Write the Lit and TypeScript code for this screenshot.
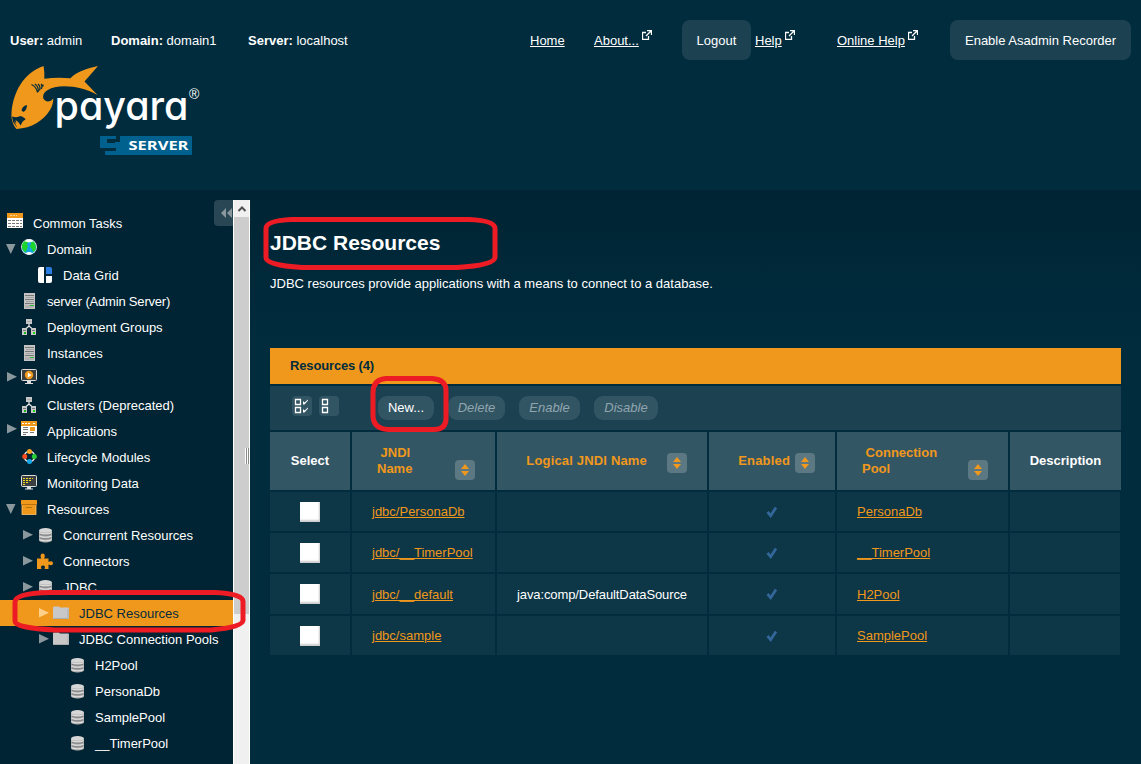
import { LitElement, html, svg, css } from "lit";
import { customElement } from "lit/decorators.js";

const server = svg`<g shape-rendering="crispEdges"><rect x="3" y="5" width="11" height="16" fill="#c4c4c4"/><path d="M4 7.500h9M4 11.500h9M4 15.500h9" stroke="#777" stroke-width="1"/><path d="M5 9.500h8M5 13.500h8" stroke="#a2a2a2"/><rect x="4" y="17" width="9" height="3" fill="#b0b0b0"/><rect x="9" y="17" width="4" height="1" fill="#2fb52f"/></g>`;
const cluster = svg`<path d="M8 10v2M8 12L4 15.500M8 12l4 3.500" stroke="#e8e8e8" stroke-width="1.200" fill="none"/><g shape-rendering="crispEdges"><rect x="5" y="5" width="6" height="5" fill="#c8c8c8"/><rect x="6" y="7" width="4" height="1" fill="#aaa"/><rect x="1" y="14" width="5" height="7" fill="#c8c8c8"/><rect x="10" y="14" width="5" height="7" fill="#c8c8c8"/><path d="M2 16.500h3M11 16.500h3" stroke="#777"/><rect x="3" y="18" width="2" height="2" fill="#17b517"/><rect x="12" y="18" width="2" height="2" fill="#17d517"/></g>`;
const db = svg`<path d="M2 8.500v9.500c0 1.500 3 2.500 6.500 2.500s6.500-1 6.500-2.500V8.500z" fill="#a9a9a9"/><path d="M2.500 10.500c1.500 1.600 10.500 1.600 12 0M2.500 14c1.500 1.600 10.500 1.600 12 0M2.500 17.500c1.500 1.600 10.500 1.600 12 0" stroke="#dedede" stroke-width="1.100" fill="none"/><path d="M3 12.300c2 1.400 9 1.400 11 0M3 15.800c2 1.400 9 1.400 11 0" stroke="#777" stroke-width=".8" fill="none"/><ellipse cx="8.500" cy="8.400" rx="6.400" ry="2.300" fill="#d6d6d6"/>`;
const folder = svg`<path d="M0 7.500q0-1 1-1h5l1 1h8q1 0 1 1v9.500q0 1-1 1H1q-1 0-1-1z" fill="#c8c8c8"/><path d="M.5 18.500h14.500V9" stroke="#aaa" fill="none"/>`;

const icons: Record<string, unknown> = {
  tasks: svg`<g shape-rendering="crispEdges"><rect y="3" width="16" height="15" fill="#fff"/><rect y="3" width="16" height="5" fill="#f0981b"/><path d="M3 5.500h2M6 5.500h2M9 5.500h1" stroke="#fbd59d"/><path d="M1 10.500h14M1 13.500h14M1 16.500h14" stroke="#777" stroke-dasharray="3 1" /></g>`,
  globe: svg`<circle cx="8" cy="11" r="7.900" fill="#fff"/><circle cx="8" cy="11" r="7.200" fill="#16a4e0"/><path d="M1 9C2 6 4 4.500 6.500 4l1 2-2 2 1.500 2-1 3-1.500 3.500C2 15 .5 12 1 9zM10 5.500l3 .5c2 3 2.500 6 1 8.500l-2 1.500-1-3-2-2 1-3z" fill="#1ed62a"/><path d="M3.500 5.200Q8 1.500 12.500 5.200L8 6.500zM4.500 17.200Q8 15 11.500 17.200 8 20 4.500 17.200z" fill="#fff"/>`,
  grid: svg`<path d="M3 5h4v16H3q-2 0-2-2V7q0-2 2-2zM9 14h6v5q0 2-2 2H9z" fill="#fff"/><path d="M9 5h4q2 0 2 2v5H9z" fill="#2a7de1"/>`,
  server,
  cluster,
  node: svg`<rect x=".5" y="3.500" width="15" height="11" rx="1" fill="#3c3f40" stroke="#ddd"/><path d="M6 15h4v2h2v1H4v-1h2z" fill="#ddd"/><circle cx="8" cy="9" r="4.200" fill="#f0981b"/><path d="M6.800 6.500v5L10.500 9z" fill="#fff"/>`,
  apps: svg`<g shape-rendering="crispEdges"><rect y="3" width="16" height="15" fill="#fff"/><rect y="3" width="16" height="5" fill="#f0981b"/><path d="M1 5.500h8M12 5.500h2" stroke="#fff" stroke-dasharray="2 1"/><path d="M2 9.500h5M2 11.500h5M2 14.500h5M2 16.500h3M9 14.500h4" stroke="#777"/><rect x="9" y="9" width="5" height="4" fill="#f0981b"/></g>`,
  lifecycle: svg`<circle cx="8.500" cy="12.500" r="5.200" stroke="#ddd" stroke-width="1.500" fill="none"/><circle cx="8.500" cy="7.500" r="2.500" fill="#f6a01b"/><circle cx="3.700" cy="12.500" r="2.500" fill="#fb4b1e"/><circle cx="13.300" cy="12.500" r="2.500" fill="#24cf35"/><circle cx="8.500" cy="17.500" r="2.500" fill="#14a8e6"/>`,
  monitor: svg`<rect x=".5" y="5.500" width="15" height="11" rx="1" fill="#3c3f40" stroke="#ddd"/><path d="M6 17h4v1.500h2v1H4v-1h2z" fill="#ddd"/><path d="M2 8.500h10M2 10.500h8M2 12.500h6M2 14.500h2" stroke="#f0da20" stroke-dasharray="2 1" shape-rendering="crispEdges"/>`,
  box: svg`<rect x="1" y="8" width="14" height="10.500" fill="#f0981b" stroke="#ffc46e" stroke-width=".8"/><rect y="4" width="16" height="4.500" rx=".5" fill="#f0981b"/><path d="M1 8.500h14" stroke="#b9700f"/><path d="M5 11.500h6" stroke="#b9700f"/>`,
  db,
  puzzle: svg`<path d="M0 10.500h4.500c-1.500-2-1-5 1.200-5s2.800 3 1.300 5h4.500v3.500c2-1.500 4.500-1 4.500 1.200s-2.500 2.500-4.500 1.200V21H7.500c1-2 .5-3.500-1.500-3.500S3.500 19 4.500 21H0z" fill="#f0981b"/>`,
  folder,
};

type Node = { t: string; icon: string; lvl: number; arrow?: "open" | "shut"; sel?: boolean; tight?: boolean };
const tree: Node[] = [
  { t: "Common Tasks", icon: "tasks", lvl: 0 },
  { t: "Domain", icon: "globe", lvl: 1, arrow: "open" },
  { t: "Data Grid", icon: "grid", lvl: 2 },
  { t: "server (Admin Server)", icon: "server", lvl: 1, tight: true },
  { t: "Deployment Groups", icon: "cluster", lvl: 1 },
  { t: "Instances", icon: "server", lvl: 1 },
  { t: "Nodes", icon: "node", lvl: 1, arrow: "shut" },
  { t: "Clusters (Deprecated)", icon: "cluster", lvl: 1 },
  { t: "Applications", icon: "apps", lvl: 1, arrow: "shut" },
  { t: "Lifecycle Modules", icon: "lifecycle", lvl: 1 },
  { t: "Monitoring Data", icon: "monitor", lvl: 1 },
  { t: "Resources", icon: "box", lvl: 1, arrow: "open" },
  { t: "Concurrent Resources", icon: "db", lvl: 2, arrow: "shut" },
  { t: "Connectors", icon: "puzzle", lvl: 2, arrow: "shut" },
  { t: "JDBC", icon: "db", lvl: 2, arrow: "shut" },
  { t: "JDBC Resources", icon: "folder", lvl: 3, arrow: "shut", sel: true },
  { t: "JDBC Connection Pools", icon: "folder", lvl: 3, arrow: "shut" },
  { t: "H2Pool", icon: "db", lvl: 4 },
  { t: "PersonaDb", icon: "db", lvl: 4 },
  { t: "SamplePool", icon: "db", lvl: 4 },
  { t: "__TimerPool", icon: "db", lvl: 4 },
];

const rows = [
  ["jdbc/PersonaDb", "", "PersonaDb"],
  ["jdbc/__TimerPool", "", "__TimerPool"],
  ["jdbc/__default", "java:comp/DefaultDataSource", "H2Pool"],
  ["jdbc/sample", "", "SamplePool"],
];

const ext = html`<svg class="ext" width="10" height="10" viewBox="0 0 10 10"><path d="M4 2.500H.5v7h6V6M5 .5h4.500V5M9 1L4 6" fill="none" stroke="#fff" stroke-width="1.300"/></svg>`;
const sort = html`<span class="sort"><svg width="20" height="20"><path d="M6 9l4-5 4 5zM6 11h8l-4 5z" fill="#f0981b"/></svg></span>`;

@customElement("app-root")
export class AppRoot extends LitElement {
  static styles = css`
    :host { display: block; position: relative; width: 1141px; height: 764px; overflow: hidden; background: #002c3e; color: #fff; font: 13px/16px "Liberation Sans", Arial, sans-serif; }
    * { box-sizing: border-box; }
    svg { display: block; flex: none; }
    header { height: 190px; padding-top: 20px; }
    .top { display: grid; grid-template-columns: 101px 137px 282px 64px 88px 73px 82px 113px 181px; align-items: center; height: 40px; padding-left: 10px; white-space: nowrap; }
    .top > span, .top > u { padding-top: 2px; }
    .lnk { display: flex; }
    .ext { margin: -3px 0 0 3px; }
    .big { height: 40px; border-radius: 8px; background: #1c4252; display: flex; align-items: center; justify-content: center; }
    .logout { width: 69px; }
    .logo { margin: 4px 0 0 8px; }
    .word { font: 500 40px Inter, sans-serif; font-feature-settings: "cv11"; }
    .reg { font: 14px "Liberation Sans", sans-serif; }
    .srv { font: 700 12.500px "Open Sans", sans-serif; }
    .body { display: flex; height: 574px; background: #002433; }
    aside { width: 233px; background: #002433; padding-top: 20px; flex: none; overflow: hidden; white-space: nowrap; }
    .row { height: 26px; display: flex; padding-left: 5px; }
    .l0 { padding-left: 7px; }
    .l2 { padding-left: 21px; }
    .l3 { padding-left: 37px; }
    .l4 { padding-left: 53px; }
    .row .t { line-height: 27px; margin-left: 10px; }
    .row .tight { letter-spacing: -0.19px; }
    .sel { background: #f0981b; color: #002c3e; }
    .collapse { position: absolute; left: 214px; top: 200px; width: 26px; height: 26px; border-radius: 4px; background: #284653; }
    .bar { width: 17px; margin-top: 10px; background: #f0f0f0; border: solid #fff; border-width: 0 1px; flex: none; position: relative; }
    .up { height: 17px; }
    .thumb { height: 397px; background: #cdcdcd; }
    .grip { position: absolute; left: 245px; top: 448px; width: 4px; height: 16px; background: linear-gradient(90deg, #fff 1px, #888 1px 2px, #fff 2px 3px, #888 3px); }
    main { flex: 1; background: linear-gradient(#002433, #002c3e 150px); padding: 41px 20px 0; }
    h1 { font-size: 21px; line-height: 24px; margin: 0; }
    .desc { margin: 21px 0 56px; }
    .title { height: 36px; background: #f0981b; color: #002c3e; font-weight: bold; padding: 10px 20px; letter-spacing: -0.15px; }
    .tools { height: 44px; margin: 2px 0; background: #1c4252; padding: 10px 0 0 22px; display: flex; }
    .ib { width: 20px; height: 20px; border-radius: 4px; background: #325564; margin-right: 7px; }
    .b { height: 24px; border-radius: 9px; background: #325564; line-height: 24px; text-align: center; margin-right: 14px; color: #91a5ae; font-style: italic; }
    .new { width: 56px; margin-left: 32px; color: #fff; font-style: normal; }
    .del { width: 57px; }
    .en { width: 61px; }
    .dis { width: 64px; }
    .grid { display: grid; grid-template-columns: 80px 143px 210px 126px 171px 111px; grid-template-rows: 58px 39px 39px 40px 39px; gap: 2px; }
    .h { background: #335665; font-weight: bold; display: flex; align-items: center; justify-content: center; color: #f0981b; white-space: pre; }
    .w { color: #fff; }
    .two { justify-content: space-between; padding: 0 20px 0 25px; }
    .two .sort { margin-top: 18px; }
    .sort { display: block; flex: none; width: 20px; height: 20px; border-radius: 4px; background: #5c7883; margin-top: 3px; }
    .log { letter-spacing: 0.17px; justify-content: flex-end; padding-right: 20px; }
    .ena { letter-spacing: 0.17px; justify-content: flex-end; padding-right: 20px; }
    .gap { margin-left: 20px; }
    .gs { margin-left: 5px; }
    .c { background: #0d3647; display: flex; align-items: center; padding-left: 20px; color: #f0981b; }
    .c.plain { color: #fff; letter-spacing: -0.1px; }
    .c.mid { justify-content: center; padding: 0; }
    .c.low { padding-top: 1px; }
    .c.last { margin-right: 1px; }
    .cb { width: 20px; height: 20px; background: #fff; box-shadow: inset -1px -2px 2px #ccc; }
    .marks { position: absolute; left: 0; top: 0; }
  `;

  row(n: Node) {
    const fill = n.sel ? "#ffd08a" : "#8a979d";
    return html`<div class="row l${n.lvl} ${n.sel ? "sel" : ""}">
      ${n.lvl === 0 ? "" : html`<svg width="16" height="26"><path d=${n.arrow === "open" ? "M1 8h9.500l-4.700 10z" : n.arrow ? (n.lvl === 1 ? "M2 6l10 4.700-10 4.700z" : "M2 8l10 4.700-10 4.700z") : ""} fill=${fill}/></svg>`}
      <svg width="16" height="26">${icons[n.icon]}</svg><span class="t ${n.tight ? "tight" : ""}">${n.t}</span>
    </div>`;
  }

  render() {
    return html`
      <header>
        <div class="top">
          <span><b>User:</b> admin</span><span><b>Domain:</b> domain1</span><span><b>Server:</b> localhost</span>
          <u>Home</u><span class="lnk"><u>About...</u>${ext}</span>
          <span class="big logout">Logout</span><span class="lnk"><u>Help</u>${ext}</span>
          <span class="lnk"><u>Online Help</u>${ext}</span><span class="big">Enable Asadmin Recorder</span>
        </div>
        <svg class="logo" width="200" height="95" viewBox="8 64 200 95">
          <path d="M43.500 66C44.300 70 44.500 74 44.300 78.700C53 77.500 62 77.300 70.500 78.300C76 72 87 68.500 98 66L84.500 81.500L97.500 95C82 86 58 83 47 90.500C44 92.500 42.500 95 43.300 98.500C46 103 50.500 102 53.300 98.500C53.500 102 52 107 50 110C43 121 32 128 16.500 129C13 125 11 119 11.500 113C13 93 23 73 43.500 66z" fill="#f0981b"/>
          <path d="M21.500 110.500Q22 106 27 105Q27 110 23.500 112zM12 116.500Q17 118 20.500 116Q25 117.500 25.500 119.500Q22 121 20.800 125.500Q18.500 121.500 15.500 120L16.500 123.500L14 121L17.500 128L13 122z" fill="#002c3e"/>
          <path d="M31.500 84.500q5 2.500 6 8M34.800 84q4 2.500 3.500 8M38 84q3 2.500 1.500 6.500M41 84q2 2 .2 5M43 84.500v2" fill="none" stroke="#002c3e" stroke-width="1.200"/>
          <text class="word" x="54.500" y="119.500" textLength="134" lengthAdjust="spacingAndGlyphs" fill="#fff">payara</text>
          <text class="reg" x="189" y="99" fill="#fff">®</text>
          <path d="M101 136h15v3h-9v4h8v-1h5v-6h71q1 0 1 1v17q0 1-1 1h-85q-1 0-1-1v-3h11v-3h-15q-1 0-1-1v-10q0-1 1-1z" fill="#00618e"/>
          <text class="srv" x="128.500" y="150" textLength="60" lengthAdjust="spacingAndGlyphs" fill="#fff">SERVER</text>
        </svg>
      </header>
      <div class="collapse"><svg width="26" height="26"><path d="M12 8v10l-5-5zM18 8v10l-5-5z" fill="#8a979d"/></svg></div>
      <div class="body">
        <aside>${tree.map((n) => this.row(n))}</aside>
        <div class="bar"><div class="up"><svg width="15" height="17"><path d="M4.500 11L8 7.500l3.500 3.500" fill="none" stroke="#505050" stroke-width="2"/></svg></div><div class="thumb"></div></div>
        <main>
          <h1>JDBC Resources</h1>
          <div class="desc">JDBC resources provide applications with a means to connect to a database.</div>
          <div class="title">Resources (4)</div>
          <div class="tools">
            <span class="ib"><svg width="20" height="20"><path d="M3.500 3.500h5v5h-5zM3.500 11.500h5v5h-5z" fill="none" stroke="#fff" stroke-width="1.300"/><path d="M11 5v3.500h1.500L16 4.500V3.500L12.500 6.500zM11 13v3.500h1.500L16 12.500V11.500L12.500 14.500z" fill="#fff"/></svg></span>
            <span class="ib"><svg width="20" height="20"><path d="M3.500 3.500h5v5h-5zM3.500 11.500h5v5h-5z" fill="none" stroke="#fff" stroke-width="1.300"/></svg></span>
            <span class="b new">New...</span><span class="b del">Delete</span><span class="b en">Enable</span><span class="b dis">Disable</span>
          </div>
          <div class="grid">
            <div class="h w">Select</div>
            <div class="h two"><span> JNDI<br>Name</span>${sort}</div>
            <div class="h log">Logical JNDI Name<span class="gap">${sort}</span></div>
            <div class="h ena">Enabled<span class="gs">${sort}</span></div>
            <div class="h two"><span> Connection<br>Pool</span>${sort}</div>
            <div class="h w">Description</div>
            ${rows.map((r, i) => html`
              <div class="c mid"><span class="cb"></span></div>
              <div class="c ${i === 2 ? "low" : ""}"><u>${r[0]}</u></div>
              <div class="c plain ${i === 2 ? "low" : ""}">${r[1]}</div>
              <div class="c mid"><svg width="12" height="12"><path d="M1.500 6l3.200 3.700L10 1.500" fill="none" stroke="#336699" stroke-width="2.800"/></svg></div>
              <div class="c ${i === 2 ? "low" : ""}"><u>${r[2]}</u></div>
              <div class="c last"></div>`)}
          </div>
        </main>
      </div>
      <div class="grip"></div>
      <svg class="marks" width="1141" height="764" fill="none" stroke="#ed1c24" stroke-width="5">
        <path d="M292 219.500h177q26 1 26 9v29q-1 8-38 10H302q-36-2-36-10v-29q0-8 26-9z"/>
        <path d="M386 378.500h46q14 1 14 12v28q0 11-12 11h-46q-15-1-15-14v-23q0-13 13-14z"/>
        <path d="M50 592.500h165q28 1 28 9v19q-1 7-32 9.500H55q-40-2-40-9v-19q0-9 35-9.500z"/>
      </svg>`;
  }
}
